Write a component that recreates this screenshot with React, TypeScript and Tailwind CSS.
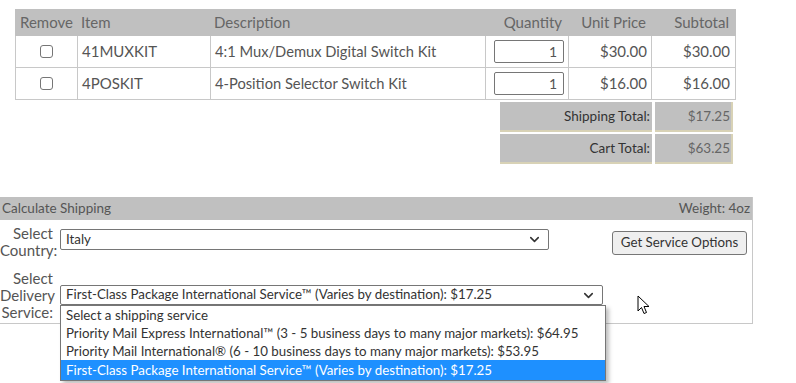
import { ChevronDown } from "lucide-react";

const items = [
  { sku: "41MUXKIT", desc: "4:1 Mux/Demux Digital Switch Kit", qty: 1, price: "$30.00", subtotal: "$30.00" },
  { sku: "4POSKIT", desc: "4-Position Selector Switch Kit", qty: 1, price: "$16.00", subtotal: "$16.00" },
];

const services = [
  "Select a shipping service",
  "Priority Mail Express International™ (3 - 5 business days to many major markets): $64.95",
  "Priority Mail International® (6 - 10 business days to many major markets): $53.95",
  "First-Class Package International Service™ (Varies by destination): $17.25",
];

const cols = "grid grid-cols-[61px_133px_275px_83px_83px_83px]";

function Cursor() {
  return (
    <svg width="14" height="20" viewBox="0 0 14 20" className="absolute left-[637px] top-[295px]">
      <path d="M1 1 L1 16 L4.5 12.5 L7 18.5 L9.5 17.5 L7 11.5 L12 11.5 Z" fill="white" stroke="black" strokeWidth="1" strokeLinejoin="round" />
    </svg>
  );
}

export default function App() {
  return (
    <div className="relative w-[796px] h-[383px] overflow-hidden bg-white font-['Segoe_UI','Lato',sans-serif]">
      {/* cart table */}
      <div className="ml-[15px] mt-[9px] w-[721px]">
        <div className={`${cols} h-[27px] bg-[#c0c0c0] text-[15px] text-[#666] items-center`}>
          <div className="text-center pl-[2px]">Remove</div>
          <div className="pl-[5px]">Item</div>
          <div className="pl-[5px]">Description</div>
          <div className="text-right pr-[5px]">Quantity</div>
          <div className="text-right pr-[4px]">Unit Price</div>
          <div className="text-right pr-[4px]">Subtotal</div>
        </div>
        {items.map((it) => (
          <div key={it.sku} className={`${cols} h-[32px] border-x border-b border-[#c8c8c8] text-[15px] text-[#555]`}>
            <div className="flex items-center justify-center">
              <span className="w-[13px] h-[13px] rounded-[3px] border border-[#767676] bg-white" />
            </div>
            <div className="flex items-center pl-[4px] border-l border-[#c8c8c8]">{it.sku}</div>
            <div className="flex items-center pl-[4px] border-l border-[#c8c8c8] text-[14.7px]">{it.desc}</div>
            <div className="flex items-center pl-[8px] border-l border-[#c8c8c8]">
              <div className="w-[70px] h-[23px] rounded-[2px] border border-[#767676] text-right pr-[6px] text-[14px] leading-[21px] text-[#555]">
                {it.qty}
              </div>
            </div>
            <div className="flex items-center justify-end pr-[4px] border-l border-[#c8c8c8]">{it.price}</div>
            <div className="flex items-center justify-end pr-[4px] border-l border-[#c8c8c8]">{it.subtotal}</div>
          </div>
        ))}
      </div>

      {/* totals */}
      <div className="ml-[500px] mt-[2px] flex flex-col gap-[2px] text-[13.5px]">
        {[
          ["Shipping Total:", "$17.25"],
          ["Cart Total:", "$63.25"],
        ].map(([label, value]) => (
          <div key={label} className="flex gap-[3px] h-[30px]">
            <div className="w-[152px] bg-[#c0c0c0] border-b-2 border-[#d8d2b6] flex items-center justify-end pr-[2px] text-[#333]">
              {label}
            </div>
            <div className="w-[78px] bg-[#c0c0c0] border-b-2 border-r-2 border-[#d8d2b6] flex items-center justify-end pr-[1px] text-[#666]">
              {value}
            </div>
          </div>
        ))}
      </div>

      {/* calculate shipping */}
      <div className="relative mt-[33px] w-[753px] border-r border-b border-[#c8c8c8]">
        <div className="h-[23px] bg-[#c0c0c0] flex items-center justify-between px-[2px] text-[13.5px] text-[#555]">
          <span>Calculate Shipping</span>
          <span>Weight: 4oz</span>
        </div>

        <div className="flex items-start pt-[5px]">
          <div className="w-[53px] text-right text-[15px] leading-[17px] text-[#555]">
            Select
            <br />
            Country:
          </div>
          <div className="ml-[7px] mt-[4px] w-[489px] h-[21px] rounded-[2px] border border-[#767676] flex items-center justify-between pl-[5px] pr-[6px] text-[13.3px] text-[#333]">
            <span>Italy</span>
            <ChevronDown size={15} strokeWidth={2.5} className="text-[#333]" />
          </div>
          <div className="ml-[63px] mt-[6px] w-[135px] h-[24px] rounded-[3px] border border-[#767676] bg-[#efefef] flex items-center justify-center text-[13.3px] text-[#333]">
            Get Service Options
          </div>
        </div>

        <div className="flex items-start pt-[11px] pb-[2px]">
          <div className="w-[53px] text-right text-[15px] leading-[17px] text-[#555]">
            Select
            <br />
            Delivery
            <br />
            Service:
          </div>
          <div className="ml-[7px] mt-[15px] w-[543px] h-[20px] rounded-[2px] border border-[#767676] flex items-center justify-between pl-[5px] pr-[6px] text-[13.3px] text-[#333]">
            <span>First-Class Package International Service™ (Varies by destination): $17.25</span>
            <ChevronDown size={15} strokeWidth={2.5} className="text-[#333]" />
          </div>
        </div>

        {/* open dropdown list */}
        <div className="absolute left-[60px] top-[108px] w-[546px] border border-[#767676] bg-white shadow-[3px_3px_4px_rgba(0,0,0,0.25)] text-[13.3px] text-[#333]">
          {services.map((s, i) => (
            <div
              key={s}
              className={
                i === services.length - 1
                  ? "h-[20px] leading-[20px] pl-[5px] bg-[#1e90ff] text-white"
                  : "h-[18px] leading-[18px] pl-[5px]"
              }
            >
              {s}
            </div>
          ))}
        </div>
      </div>

      <Cursor />
    </div>
  );
}
